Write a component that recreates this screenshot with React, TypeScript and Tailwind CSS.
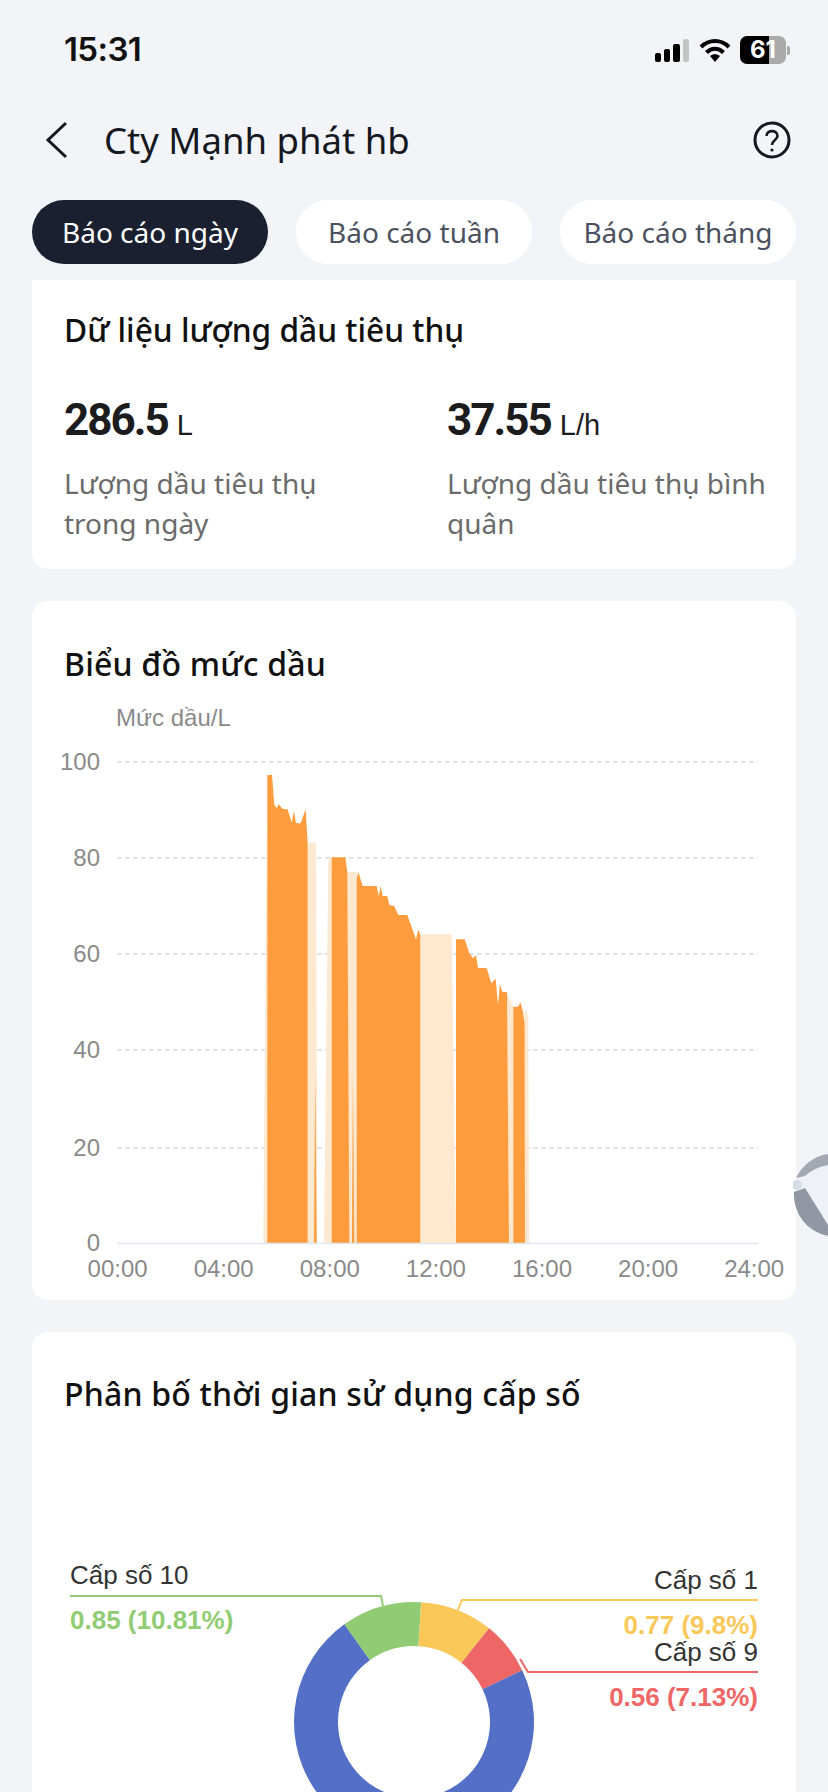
import React from 'react';

const tabs = ['Báo cáo ngày', 'Báo cáo tuần', 'Báo cáo tháng'];
const yTicks = [
  { label: '100', y: 762 },
  { label: '80', y: 858 },
  { label: '60', y: 954 },
  { label: '40', y: 1050 },
  { label: '20', y: 1148 },
];
const xTicks = ['00:00', '04:00', '08:00', '12:00', '16:00', '20:00', '24:00'];

const lightAreas = [
  '100,1510 110,250 116,1510',
  '233,1510 233,308 258,308 262,1510',
  '282,1510 295,360 305,352 305,1510',
  '352,1510 352,396 380,396 380,1510',
  '571,1510 571,583 665,583 678,1510',
  '831,1510 831,760 850,800 850,1510',
  '884,1510 884,800 895,830 897,1510',
];
const darkAreas = [
  '112,1510 112,105 126,105 133,195 140,204 146,193 158,207 173,208 185,248 192,213 198,250 212,250 227,208 233,310 233,1510',
  '256,1000 260,1510 252,1510',
  '305,1510 305,352 346,352 352,396 358,1510',
  '369,1000 373,1510 366,1510',
  '380,1510 380,415 385,396 398,438 440,438 446,468 452,438 458,468 472,468 478,496 492,497 505,525 532,525 558,598 565,568 571,585 571,1510',
  '678,1510 678,598 704,598 718,640 730,655 738,645 744,684 770,684 784,730 797,716 804,795 810,732 817,756 831,756 837,1510',
  '850,1510 850,800 865,800 871,787 878,810 884,850 885,1510',
];

const slices = [
  { from: -35.5, to: 3.4, color: '#91cc75' },
  { from: 3.4, to: 38.7, color: '#fac858' },
  { from: 38.7, to: 64.4, color: '#ee6666' },
  { from: 64.4, to: 324.5, color: '#5470c6' },
];

function arcPath(from: number, to: number) {
  const cx = 414;
  const cy = 1722;
  const R = 120;
  const r = 76;
  const pt = (rad: number, deg: number) => {
    const a = (deg * Math.PI) / 180;
    return `${cx + rad * Math.sin(a)} ${cy - rad * Math.cos(a)}`;
  };
  const large = to - from > 180 ? 1 : 0;
  return `M${pt(R, from)} A${R} ${R} 0 ${large} 1 ${pt(R, to)} L${pt(r, to)} A${r} ${r} 0 ${large} 0 ${pt(r, from)} Z`;
}

const StatusBar = () => (
  <div className="h-[100px] flex items-center justify-between pl-[64px] pr-[38px]">
    <span className="text-[33px] font-semibold text-[#111] font-['Inter',sans-serif] tracking-[-0.6px]">15:31</span>
    <div className="flex items-center">
      <div className="flex items-end gap-[3px] h-[23px]">
        <div className="w-[6px] h-[9px] rounded-[2px] bg-black" />
        <div className="w-[6px] h-[13px] rounded-[2px] bg-black" />
        <div className="w-[7px] h-[18px] rounded-[2px] bg-black" />
        <div className="w-[6px] h-[23px] rounded-[2px] bg-[#c4c4c4]" />
      </div>
      <svg className="ml-[10px]" width="32" height="24" viewBox="0 0 32 24">
        <path d="M2 9 C10 1 22 1 30 9" fill="none" stroke="#000" strokeWidth="4" />
        <path d="M7.5 14.5 C12.5 9.5 19.5 9.5 24.5 14.5" fill="none" stroke="#000" strokeWidth="4" />
        <path d="M11 18 C14 15.5 18 15.5 21 18 L16 24 Z" fill="#000" />
      </svg>
      <div className="relative ml-[9px] flex w-[46px] h-[28px] rounded-[7px] overflow-hidden">
        <div className="w-[29px] bg-black" />
        <div className="flex-1 bg-[#aaa]" />
        <span className="absolute inset-0 flex items-center justify-center text-[24px] leading-none font-bold text-white font-['Inter',sans-serif]">61</span>
      </div>
      <div className="ml-[1px] w-[3px] h-[9px] rounded-r-[2px] bg-[#aaa]" />
    </div>
  </div>
);

const Stat = ({ value, unit, label }: { value: string; unit: string; label: string }) => (
  <div>
    <div className="flex items-baseline h-[50px]">
      <span className="text-[44px] leading-[50px] font-bold text-[#1c1c1e] font-['Roboto',sans-serif] tracking-[-2px]">{value}</span>
      <span className="ml-[9px] text-[29px] leading-[50px] text-[#1c1c1e] font-['Liberation_Sans',sans-serif]">{unit}</span>
    </div>
    <p className="mt-[18px] text-[28px] leading-[40px] text-[#6b6b6b]">{label}</p>
  </div>
);

const FuelChart = () => (
  <svg className="block mt-[16px]" width="764" height="590" viewBox="32 700 764 590" fontFamily="'Liberation Sans', sans-serif">
    <text x="116" y="726" fontSize="24" fill="#8a8a8a">Mức dầu/L</text>
    {yTicks.map((t) => (
      <g key={t.label}>
        <line x1="117" x2="758" y1={t.y} y2={t.y} stroke="#dcdcdc" strokeWidth="1.5" strokeDasharray="5 3" />
        <text x="100" y={t.y + 8} fontSize="24" fill="#8a8a8a" textAnchor="end">{t.label}</text>
      </g>
    ))}
    <text x="100" y="1251" fontSize="24" fill="#8a8a8a" textAnchor="end">0</text>
    <g transform="translate(230 740) scale(0.3333)">
      {lightAreas.map((p) => <polygon key={p} points={p} fill="#fee8cf" />)}
      {darkAreas.map((p) => <polygon key={p} points={p} fill="#ff9c3e" />)}
    </g>
    <line x1="117" x2="758" y1="1243.5" y2="1243.5" stroke="#e0e6f1" strokeWidth="1.5" />
    {xTicks.map((t, i) => (
      <text key={t} x={117.6 + i * 106.1} y="1277" fontSize="24" fill="#8a8a8a" textAnchor="middle">{t}</text>
    ))}
  </svg>
);

const GearDonut = () => (
  <svg className="block mt-[126px]" width="764" height="300" viewBox="32 1540 764 300" fontFamily="'Liberation Sans', sans-serif">
    {slices.map((s) => <path key={s.color} d={arcPath(s.from, s.to)} fill={s.color} />)}
    <polyline points="70,1596 381,1596 383,1606" fill="none" stroke="#91cc75" strokeWidth="2" />
    <polyline points="458,1610 462,1600 758,1600" fill="none" stroke="#fac858" strokeWidth="2" />
    <polyline points="520,1659 528,1672 758,1672" fill="none" stroke="#ee6666" strokeWidth="2" />
    <text x="70" y="1584" fontSize="26" fill="#333">Cấp số 10</text>
    <text x="70" y="1629" fontSize="26" fontWeight="700" fill="#91cc75">0.85 (10.81%)</text>
    <text x="758" y="1589" fontSize="26" fill="#333" textAnchor="end">Cấp số 1</text>
    <text x="758" y="1634" fontSize="26" fontWeight="700" fill="#fac858" textAnchor="end">0.77 (9.8%)</text>
    <text x="758" y="1661" fontSize="26" fill="#333" textAnchor="end">Cấp số 9</text>
    <text x="758" y="1706" fontSize="26" fontWeight="700" fill="#ee6666" textAnchor="end">0.56 (7.13%)</text>
  </svg>
);

export default function App() {
  return (
    <div className="relative h-[1792px] overflow-hidden bg-[#f2f4f8] font-['Noto_Sans',sans-serif]">
      <StatusBar />

      <div className="h-[80px] flex items-center pl-[45px] pr-[37px]">
        <svg width="24" height="38" viewBox="0 0 24 38" fill="none" stroke="#15181f" strokeWidth="3">
          <polyline points="21,2 3,19 21,36" />
        </svg>
        <h1 className="ml-[35px] flex-1 text-[36.5px] text-[#15181f]">Cty Mạnh phát hb</h1>
        <svg width="38" height="38" viewBox="0 0 38 38" fill="none" stroke="#15181f" strokeWidth="3">
          <circle cx="19" cy="19" r="17" />
          <path d="M13.5 15 C13.5 8.5 24.5 8.5 24.5 15 C24.5 19 19 19 19 24" strokeWidth="2.6" />
          <circle cx="19" cy="29" r="1.6" fill="#15181f" stroke="none" />
        </svg>
      </div>

      <div className="mt-[20px] mx-[32px] flex justify-between">
        {tabs.map((tab, i) => (
          <div
            key={tab}
            className={`w-[236px] h-[64px] rounded-full flex items-center justify-center text-[28px] ${
              i === 0 ? 'bg-[#1a2030] text-white' : 'bg-white text-[#4c5160]'
            }`}
          >
            {tab}
          </div>
        ))}
      </div>

      <div className="mt-[16px] mx-[32px] h-[289px] bg-white rounded-b-[16px] pl-[32px] pr-[16px] pt-[30px]">
        <h2 className="text-[31.7px] leading-[40px] font-medium text-[#111]">Dữ liệu lượng dầu tiêu thụ</h2>
        <div className="mt-[45px] grid grid-cols-[383px_1fr]">
          <div className="w-[280px]">
            <Stat value="286.5" unit="L" label="Lượng dầu tiêu thụ trong ngày" />
          </div>
          <Stat value="37.55" unit="L/h" label="Lượng dầu tiêu thụ bình quân" />
        </div>
      </div>

      <div className="mt-[32px] mx-[32px] h-[699px] bg-white rounded-[16px] pt-[43px]">
        <h2 className="px-[32px] text-[32px] tracking-[0.2px] leading-[40px] font-medium text-[#111]">Biểu đồ mức dầu</h2>
        <FuelChart />
      </div>

      <div className="mt-[32px] mx-[32px] h-[500px] bg-white rounded-t-[16px] pt-[42px]">
        <h2 className="px-[32px] text-[32px] tracking-[0.2px] leading-[40px] font-medium text-[#111]">Phân bố thời gian sử dụng cấp số</h2>
        <GearDonut />
      </div>

      {/* floating assistant button, cut by the screen edge */}
      <svg className="absolute right-0 top-[1150px]" width="35" height="90" viewBox="0 0 35 90">
        <circle cx="43" cy="45" r="42" fill="#eef1f6" />
        <path d="M3 28 A42 42 0 0 1 35 4 L35 15 Q20 18 12 26 Z" fill="#a4a8b2" />
        <path d="M1 42 A42 42 0 0 0 35 86 L35 75 L12 38 Z" fill="#9297a4" />
        <circle cx="4" cy="35" r="5" fill="#d5dde5" />
      </svg>
    </div>
  );
}
